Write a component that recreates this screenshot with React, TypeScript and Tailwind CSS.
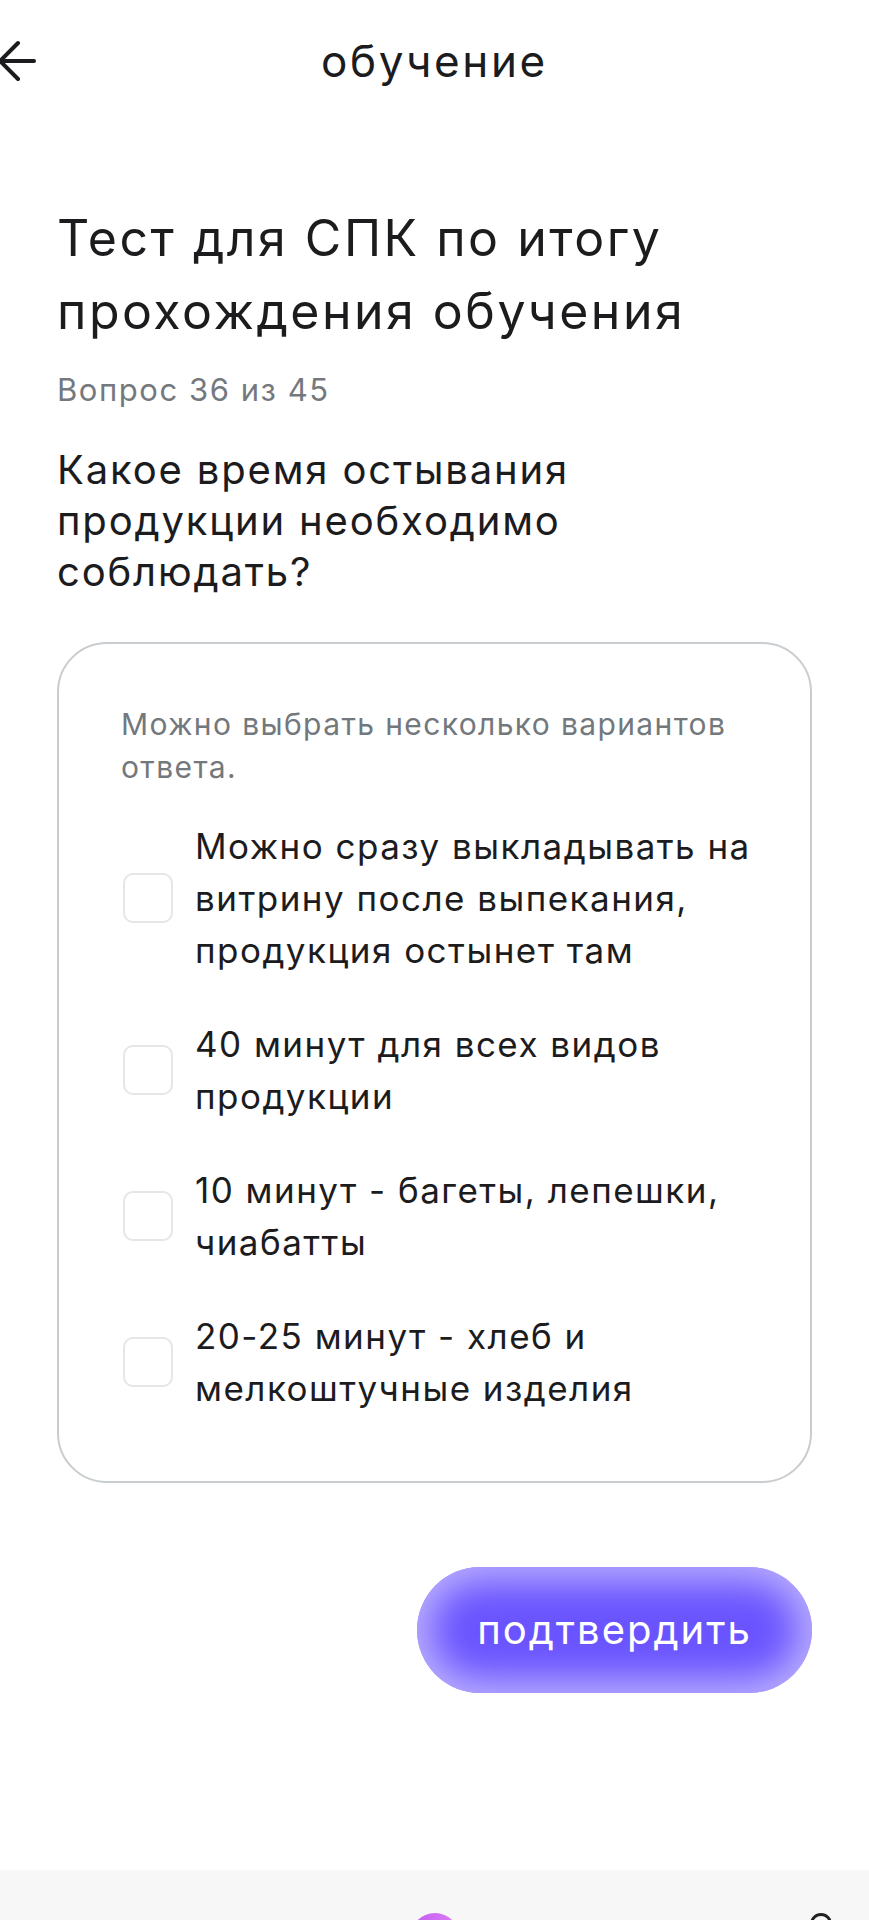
const options = [
  "Можно сразу выкладывать на витрину после выпекания, продукция остынет там",
  "40 минут для всех видов продукции",
  "10 минут - багеты, лепешки, чиабатты",
  "20-25 минут - хлеб и мелкоштучные изделия",
];

export default function App() {
  return (
    <div className="min-h-[1920px] w-full bg-white flex flex-col font-['Inter',sans-serif] tracking-[0.04em] text-[#1c1c1e]">
      {/* Header */}
      <header className="grid grid-cols-[1fr_auto_1fr] items-center h-[122px]">
        <button className="justify-self-start -ml-[2px] text-[#1c1c1e]">
          <svg width="40" height="44" viewBox="0 0 40 44" fill="none" stroke="currentColor" strokeWidth="4" strokeLinecap="round" strokeLinejoin="round">
            <path d="M36 22H3" />
            <path d="M20 4L2 22L20 40" />
          </svg>
        </button>
        <h1 className="text-[44px] leading-none tracking-[0.06em]">обучение</h1>
        <div />
      </header>

      {/* Content */}
      <main className="px-[57px] flex flex-col">
        <h2 className="mt-[80px] text-[50px] leading-[73px] tracking-[0.05em]">
          Тест для СПК по итогу прохождения обучения
        </h2>
        <p className="mt-[22px] text-[31px] leading-[40px] tracking-[0.05em] text-[#75797e]">Вопрос 36 из 45</p>
        <h3 className="mt-[34px] text-[40px] leading-[51px] tracking-[0.046em] pr-[160px]">
          Какое время остывания продукции необходимо соблюдать?
        </h3>

        {/* Options card */}
        <section className="mt-[45px] border-2 border-[#c9cdd0] rounded-[50px] pl-[62px] pr-[40px] pt-[59px] pb-[67px]">
          <p className="text-[30px] leading-[43px] tracking-[0.046em] text-[#73787d]">
            Можно выбрать несколько вариантов ответа.
          </p>
          <ul className="mt-[31px] flex flex-col gap-[42px]">
            {options.map((o) => (
              <li key={o} className="flex items-center gap-[22px]">
                <span className="shrink-0 ml-[2px] w-[50px] h-[50px] rounded-[10px] border-2 border-[#e6e6e8]" />
                <span className="text-[35px] leading-[52px] tracking-[0.042em]">{o}</span>
              </li>
            ))}
          </ul>
        </section>

        {/* Confirm */}
        <div className="mt-[84px] flex justify-end">
          <button className="w-[395px] h-[126px] rounded-full bg-[#6a54ff] shadow-[inset_0_0_36px_14px_rgba(200,190,255,0.85)] text-white text-[40px] leading-none tracking-[0.05em]">
            подтвердить
          </button>
        </div>
      </main>

      <div className="flex-1" />

      {/* Bottom nav */}
      <nav className="h-[50px] bg-[#f7f7f8] relative overflow-hidden">
        <span className="absolute left-[410px] top-[43px] w-[50px] h-[50px] rounded-full bg-gradient-to-r from-[#c25cf0] to-[#e07cf7]" />
        <span className="absolute left-[810px] top-[43px] w-[22px] h-[22px] rounded-full border-[3px] border-[#222]" />
      </nav>
    </div>
  );
}
